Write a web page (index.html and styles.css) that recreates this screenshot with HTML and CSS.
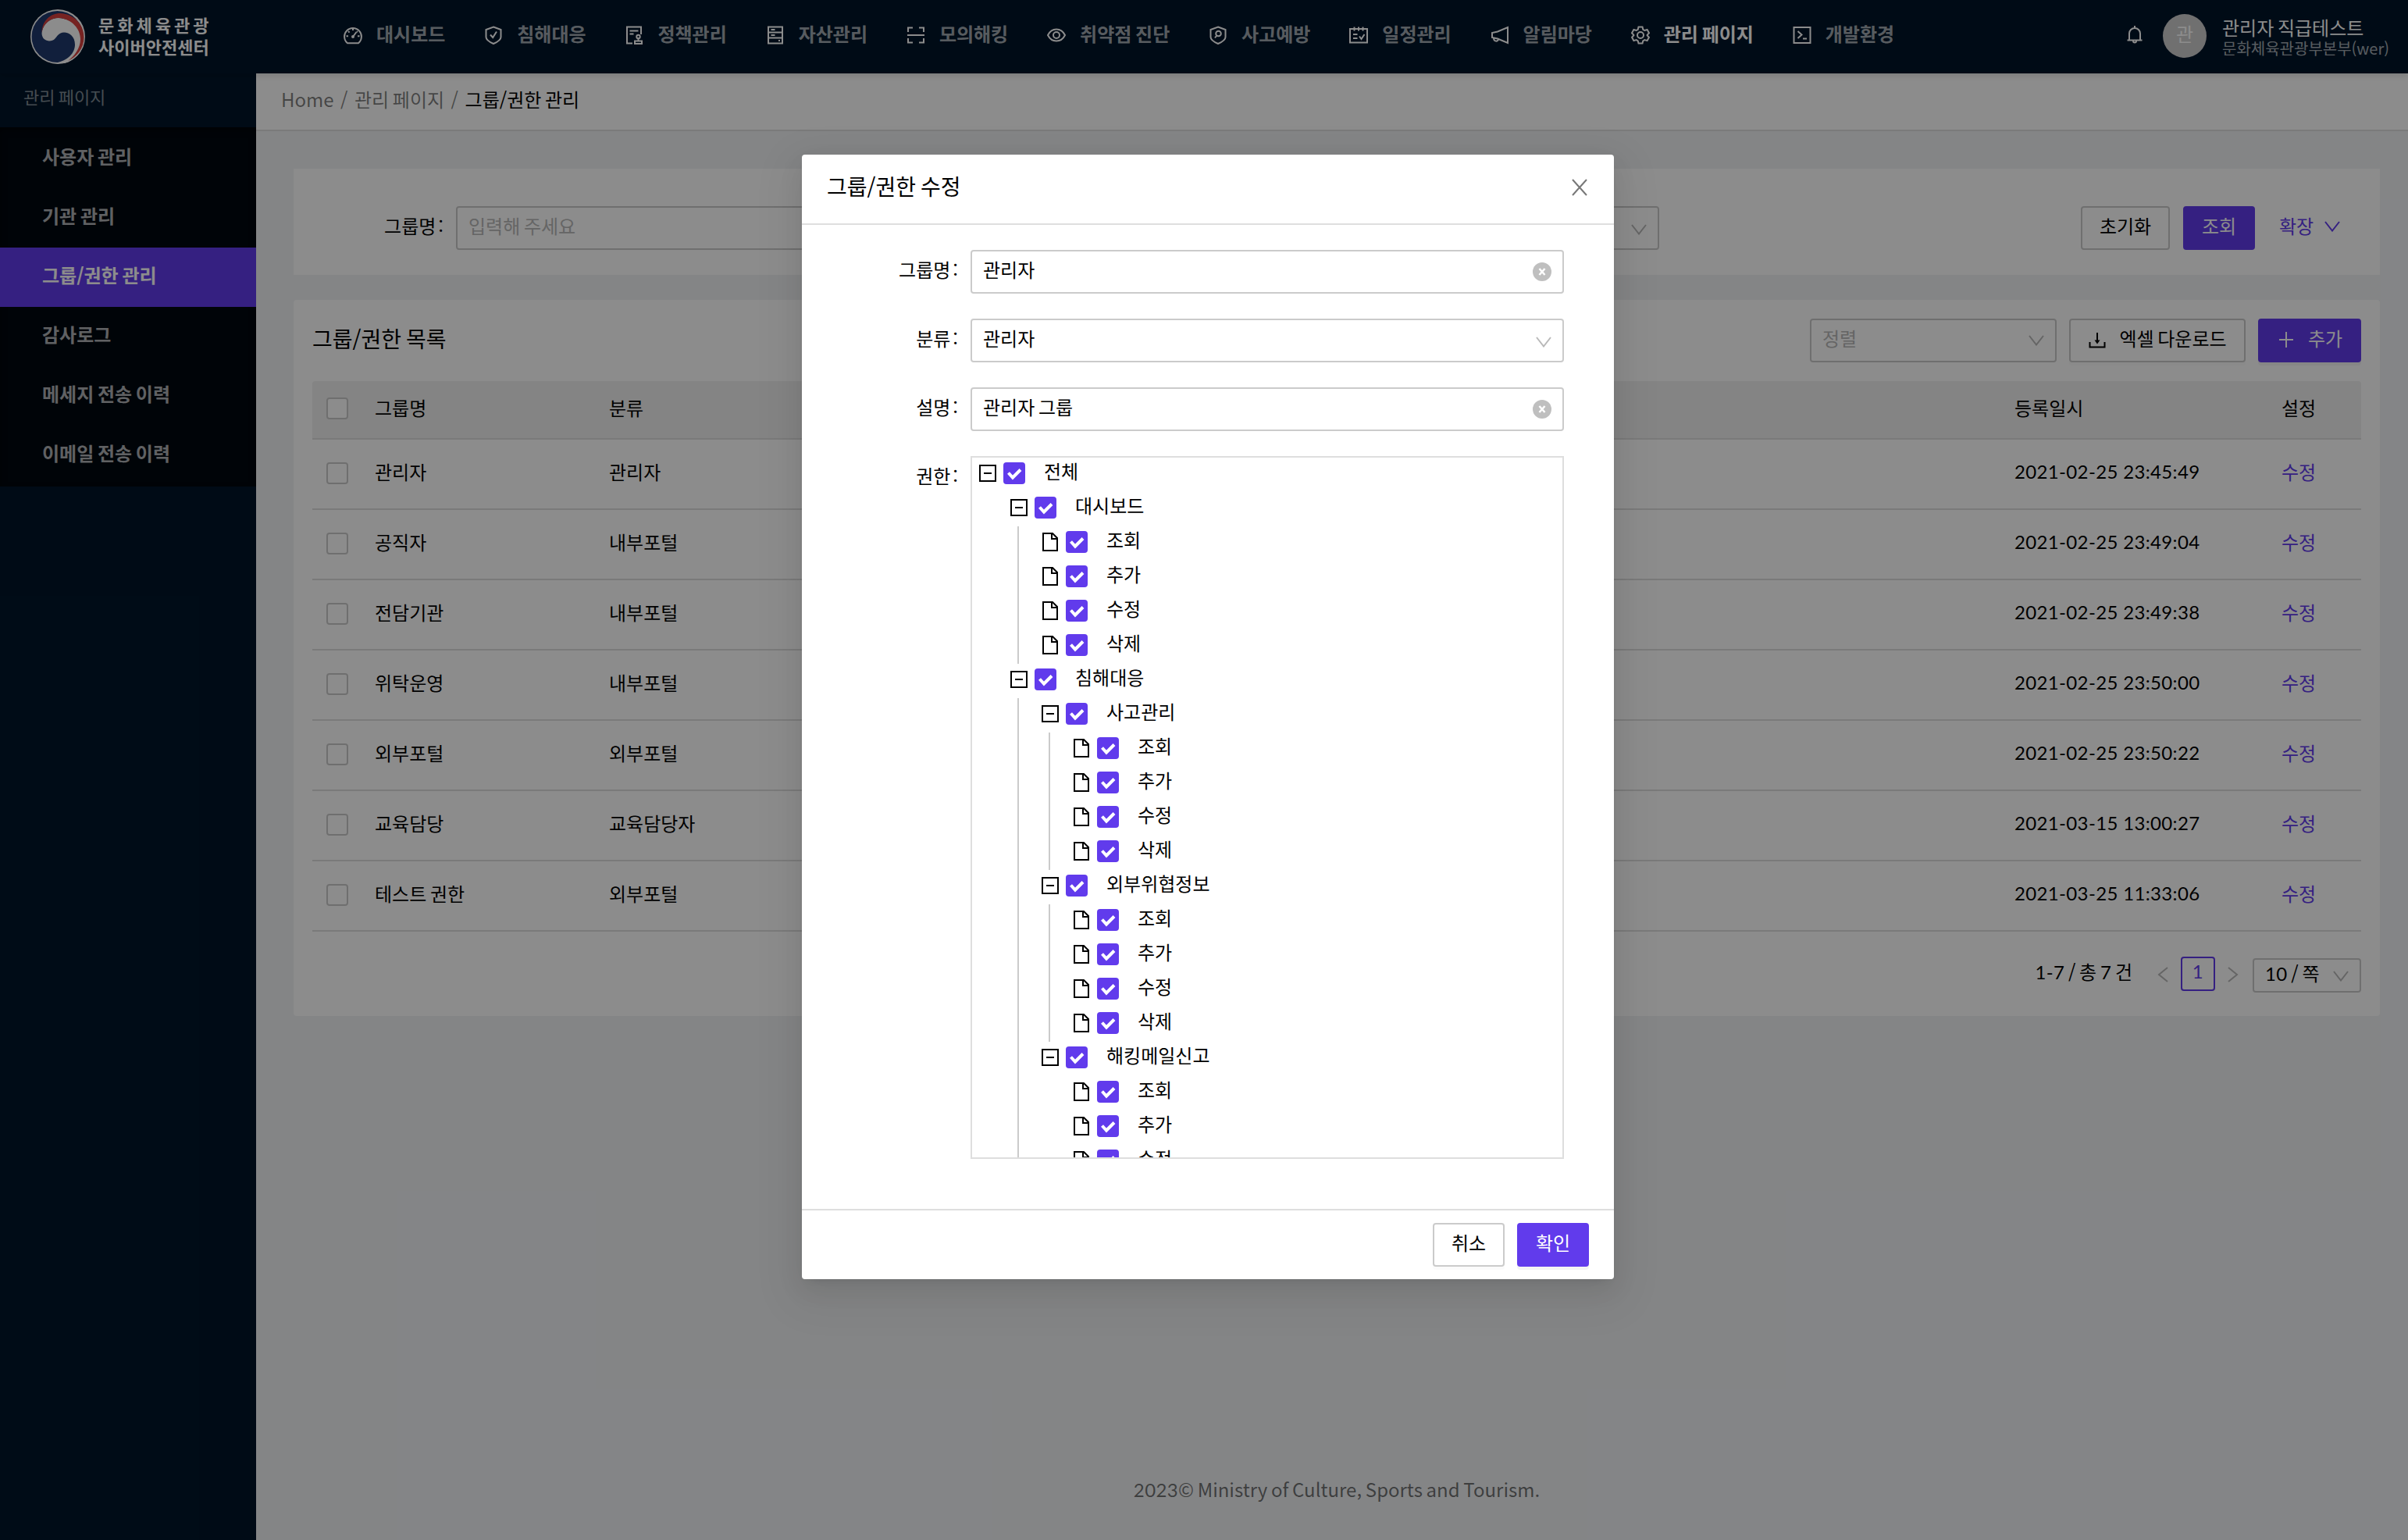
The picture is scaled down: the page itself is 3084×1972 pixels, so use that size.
FILE: index.html
```html
<!DOCTYPE html>
<html lang="ko">
<head>
<meta charset="utf-8">
<title>그룹/권한 관리</title>
<link rel="stylesheet" href="styles.css">
</head>
<body>
<svg class="sprite" aria-hidden="true">
  <symbol id="i-dash" viewBox="0 0 24 24"><path d="M5 22.2A10.9 10.9 0 1 1 19 22.2Z"/><path d="M12 14 16.5 8M12 3.5V6M3.5 13.2H6M18 13.2h2.500M6 7l1.600 1.600M18 7l-1 1" /><circle cx="12" cy="14" r="1"/></symbol>
  <symbol id="i-shield" viewBox="0 0 24 24"><path d="M12 1.500 21.500 5v9.500c0 3-5 6.500-9.500 8.500-4.500-2-9.500-5.500-9.500-8.500V5Z"/><path d="m8 11.500 3.200 3.500L16 7.500"/></symbol>
  <symbol id="i-policy" viewBox="0 0 24 24"><path d="M10 22.500H3V1.500h18V11M6.500 6.500h11M6.500 10.500h5"/><circle cx="17.500" cy="14" r="2.200"/><path d="M17.500 16v3.500M13 19.500h9v3.500h-9z"/></symbol>
  <symbol id="i-server" viewBox="0 0 24 24"><path d="M3 1.500h18v21H3zM3 8.500h18M3 15.500h18M6.500 5h5M6.500 12h5"/><path d="M16 19h2"/></symbol>
  <symbol id="i-scan" viewBox="0 0 24 24"><path d="M2 8V2.500h6M16 2.500h6V8M2 16v5.500h6M16 21.500h6V16M1 12h22"/></symbol>
  <symbol id="i-eye" viewBox="0 0 24 24"><path d="M1 12C6 2 18 2 23 12 18 22 6 22 1 12Z"/><circle cx="12" cy="12" r="4"/></symbol>
  <symbol id="i-prevent" viewBox="0 0 24 24"><path d="M12 1.500 21.500 5v9.500c0 3-5 6.500-9.500 8.500-4.500-2-9.500-5.500-9.500-8.500V5Z"/><circle cx="12.500" cy="10" r="3.300"/><path d="m10.300 12.500-2.300 3"/></symbol>
  <symbol id="i-cal" viewBox="0 0 24 24"><path d="M1 4h22v17.500H1zM6.500 1.500v5M12 1.500v5M17.500 1.500v5M5 11h5.500M5 16h5.500M13 13.500l2.500 3.500 4-6"/></symbol>
  <symbol id="i-horn" viewBox="0 0 24 24"><path d="M22 2v20L9 16.500 2 15V9l7-1.500ZM4 15.500c0 5 5.500 5.500 6 1.500"/></symbol>
  <symbol id="i-gear" viewBox="0 0 24 24"><path d="M9.500 1.500h5l.8 3.300 2 1.200 3.300-1 2.400 4.300-2.400 2.500v.5l2.400 2.500-2.400 4.300-3.300-1-2 1.200-.8 3.300h-5l-.8-3.300-2-1.200-3.300 1L1 14.800l2.400-2.500v-.5L1 9.300 3.400 5l3.300 1 2-1.200Z"/><circle cx="12" cy="12" r="4"/></symbol>
  <symbol id="i-dev" viewBox="0 0 24 24"><path d="M1.500 2h21v20h-21zM6.500 7l5 4.500-5 4.500M13 16.500h5"/></symbol>
  <symbol id="i-bell" viewBox="0 0 24 24"><path d="M5 19.500V11a7 7 0 0 1 14 0v8.500M2.500 19.500h19M12 1v3M10 20.500a2 2 0 0 0 4 0"/></symbol>
  <symbol id="i-down" viewBox="0 0 20 14"><path d="m1 1 9 11.500L19 1"/></symbol>
  <symbol id="i-file" viewBox="0 0 20 24"><path d="M1 1h12l6 6v16H1zM12 1v7h7"/></symbol>
  <symbol id="i-minus" viewBox="0 0 22 22"><path d="M1 1h20v20H1zM6 11h10"/></symbol>
  <symbol id="i-check" viewBox="0 0 28 28"><path d="m6.500 13.500 5.500 6 10-10"/></symbol>
  <symbol id="i-clear" viewBox="0 0 24 24"><circle cx="12" cy="12" r="12"/><path d="m8.500 8 7 8M15.500 8l-7 8"/></symbol>
</svg>

<div class="app">
  <header class="top">
    <div class="brand">
      <svg class="emblem" viewBox="0 0 70 70"><circle cx="35" cy="35" r="35" fill="#fff"/><circle cx="34.500" cy="35" r="33" fill="#1f3a6e"/><path fill="#fff" d="M14.500 32C15 18 26 11 36 11c18 1 33 14 33 27 0 15-13 28-25 31H31c17-3 26-13 26-24 0-10-7-15.500-14-15.500S34 35 31 38c-4 4-16.500 4-16.500-8Z"/><path fill="#d8403f" d="M14.500 30C15 14 26 5 38 5c19 1 30.500 15 30.500 31 0 14-9.500 25-20.500 30 8-6 16-16 16-28S54 12 36 11c-10 0-20 7-21.500 19Z"/></svg>
      <div class="brand-text"><b class="wide">문화체육관광</b><b>사이버안전센터</b></div>
    </div>
    <nav class="nav">
      <a><svg><use href="#i-dash"/></svg><span class="t">대시보드</span></a>
      <a><svg><use href="#i-shield"/></svg><span class="t">침해대응</span></a>
      <a><svg><use href="#i-policy"/></svg><span class="t">정책관리</span></a>
      <a><svg><use href="#i-server"/></svg><span class="t">자산관리</span></a>
      <a><svg><use href="#i-scan"/></svg><span class="t">모의해킹</span></a>
      <a><svg><use href="#i-eye"/></svg><span class="t">취약점 진단</span></a>
      <a><svg><use href="#i-prevent"/></svg><span class="t">사고예방</span></a>
      <a><svg><use href="#i-cal"/></svg><span class="t">일정관리</span></a>
      <a><svg><use href="#i-horn"/></svg><span class="t">알림마당</span></a>
      <a class="on"><svg><use href="#i-gear"/></svg><span class="t">관리 페이지</span></a>
      <a><svg><use href="#i-dev"/></svg><span class="t">개발환경</span></a>
    </nav>
    <div class="user">
      <svg class="bell"><use href="#i-bell"/></svg>
      <div class="avatar"><span class="t">관</span></div>
      <div class="who"><span class="name">관리자 직급테스트</span><span class="org">문화체육관광부본부(wer)</span></div>
    </div>
  </header>

  <div class="body">
    <aside class="side">
      <div class="side-title">관리 페이지</div>
      <ul class="menu">
        <li><span class="t">사용자 관리</span></li>
        <li><span class="t">기관 관리</span></li>
        <li class="on"><span class="t">그룹/권한 관리</span></li>
        <li><span class="t">감사로그</span></li>
        <li><span class="t">메세지 전송 이력</span></li>
        <li><span class="t">이메일 전송 이력</span></li>
      </ul>
    </aside>
    <main class="main">
      <div class="crumbs"><span class="t">Home</span><span class="t">/</span><span class="t">관리 페이지</span><span class="t">/</span><span class="t here">그룹/권한 관리</span></div>
      <div class="content">
        <section class="card search">
          <label class="lab"><span class="t">그룹명</span><span class="t colon">:</span></label>
          <div class="box grow hint"><span class="t">입력해 주세요</span></div>
          <div class="box second hint"><span class="t"></span><svg class="chev"><use href="#i-down"/></svg></div>
          <div class="btn reset"><span class="t">초기화</span></div>
          <div class="btn primary go"><span class="t">조회</span></div>
          <div class="expand"><span class="t">확장</span><svg class="chev"><use href="#i-down"/></svg></div>
        </section>
        <section class="card list">
          <div class="bar">
            <h2><span class="t">그룹/권한 목록</span></h2>
            <div class="box sort hint"><span class="t">정렬</span><svg class="chev"><use href="#i-down"/></svg></div>
            <div class="btn excel"><svg viewBox="0 0 24 24"><path d="M12 3v13M2.500 15v6.500h19V15"/><path class="solid" d="m8.500 12.500 3.500 5 3.500-5z"/></svg><span class="t">엑셀 다운로드</span></div>
            <div class="btn primary add"><svg viewBox="0 0 24 24"><path d="M12 2v20M3 12h18"/></svg><span class="t">추가</span></div>
          </div>
          <div class="table">
            <div class="tr th"><i class="cb"></i><span class="t">그룹명</span><span class="t">분류</span><span class="t">등록일시</span><span class="t mid">설정</span></div>
            <div class="tr"><i class="cb"></i><span class="t">관리자</span><span class="t">관리자</span><span class="t num">2021-02-25 23:45:49</span><span class="t mid link">수정</span></div>
            <div class="tr"><i class="cb"></i><span class="t">공직자</span><span class="t">내부포털</span><span class="t num">2021-02-25 23:49:04</span><span class="t mid link">수정</span></div>
            <div class="tr"><i class="cb"></i><span class="t">전담기관</span><span class="t">내부포털</span><span class="t num">2021-02-25 23:49:38</span><span class="t mid link">수정</span></div>
            <div class="tr"><i class="cb"></i><span class="t">위탁운영</span><span class="t">내부포털</span><span class="t num">2021-02-25 23:50:00</span><span class="t mid link">수정</span></div>
            <div class="tr"><i class="cb"></i><span class="t">외부포털</span><span class="t">외부포털</span><span class="t num">2021-02-25 23:50:22</span><span class="t mid link">수정</span></div>
            <div class="tr"><i class="cb"></i><span class="t">교육담당</span><span class="t">교육담당자</span><span class="t num">2021-03-15 13:00:27</span><span class="t mid link">수정</span></div>
            <div class="tr"><i class="cb"></i><span class="t">테스트 권한</span><span class="t">외부포털</span><span class="t num">2021-03-25 11:33:06</span><span class="t mid link">수정</span></div>
          </div>
          <div class="pager">
            <span class="t total"><span class="num">1-7</span> / 총 <span class="num">7</span> 건</span>
            <svg class="arr" viewBox="0 0 14 20"><path d="M13 1 2 10l11 9"/></svg>
            <div class="page"><span class="t num">1</span></div>
            <svg class="arr next" viewBox="0 0 14 20"><path d="m1 1 11 9-11 9"/></svg>
            <div class="box size"><span class="t"><span class="num">10</span> / 쪽</span><svg class="chev"><use href="#i-down"/></svg></div>
          </div>
        </section>
        <footer class="foot"><span class="t"><span class="num">2023</span>© Ministry of Culture, Sports and Tourism.</span></footer>
      </div>
    </main>
  </div>
</div>

<div class="mask">
  <div class="modal">
    <div class="m-head"><span class="t">그룹/권한 수정</span><svg class="close" viewBox="0 0 20 22"><path d="m1 1 18 20M19 1 1 21"/></svg></div>
    <div class="m-body">
      <div class="field"><label class="lab"><span class="t">그룹명</span><span class="t colon">:</span></label><div class="box"><span class="t">관리자</span><svg class="clear"><use href="#i-clear"/></svg></div></div>
      <div class="field"><label class="lab"><span class="t">분류</span><span class="t colon">:</span></label><div class="box"><span class="t">관리자</span><svg class="chev"><use href="#i-down"/></svg></div></div>
      <div class="field"><label class="lab"><span class="t">설명</span><span class="t colon">:</span></label><div class="box"><span class="t">관리자 그룹</span><svg class="clear"><use href="#i-clear"/></svg></div></div>
      <div class="field"><label class="lab"><span class="t">권한</span><span class="t colon">:</span></label>
        <div class="tree">
          <div class="node"><svg class="sw"><use href="#i-minus"/></svg><svg class="ck"><use href="#i-check"/></svg><span class="t">전체</span></div>
          <div class="kids">
            <div class="node"><svg class="sw"><use href="#i-minus"/></svg><svg class="ck"><use href="#i-check"/></svg><span class="t">대시보드</span></div>
            <div class="kids line">
              <div class="node"><svg class="fi"><use href="#i-file"/></svg><svg class="ck"><use href="#i-check"/></svg><span class="t">조회</span></div>
              <div class="node"><svg class="fi"><use href="#i-file"/></svg><svg class="ck"><use href="#i-check"/></svg><span class="t">추가</span></div>
              <div class="node"><svg class="fi"><use href="#i-file"/></svg><svg class="ck"><use href="#i-check"/></svg><span class="t">수정</span></div>
              <div class="node"><svg class="fi"><use href="#i-file"/></svg><svg class="ck"><use href="#i-check"/></svg><span class="t">삭제</span></div>
            </div>
            <div class="node"><svg class="sw"><use href="#i-minus"/></svg><svg class="ck"><use href="#i-check"/></svg><span class="t">침해대응</span></div>
            <div class="kids line">
              <div class="node"><svg class="sw"><use href="#i-minus"/></svg><svg class="ck"><use href="#i-check"/></svg><span class="t">사고관리</span></div>
              <div class="kids line">
                <div class="node"><svg class="fi"><use href="#i-file"/></svg><svg class="ck"><use href="#i-check"/></svg><span class="t">조회</span></div>
                <div class="node"><svg class="fi"><use href="#i-file"/></svg><svg class="ck"><use href="#i-check"/></svg><span class="t">추가</span></div>
                <div class="node"><svg class="fi"><use href="#i-file"/></svg><svg class="ck"><use href="#i-check"/></svg><span class="t">수정</span></div>
                <div class="node"><svg class="fi"><use href="#i-file"/></svg><svg class="ck"><use href="#i-check"/></svg><span class="t">삭제</span></div>
              </div>
              <div class="node"><svg class="sw"><use href="#i-minus"/></svg><svg class="ck"><use href="#i-check"/></svg><span class="t">외부위협정보</span></div>
              <div class="kids line">
                <div class="node"><svg class="fi"><use href="#i-file"/></svg><svg class="ck"><use href="#i-check"/></svg><span class="t">조회</span></div>
                <div class="node"><svg class="fi"><use href="#i-file"/></svg><svg class="ck"><use href="#i-check"/></svg><span class="t">추가</span></div>
                <div class="node"><svg class="fi"><use href="#i-file"/></svg><svg class="ck"><use href="#i-check"/></svg><span class="t">수정</span></div>
                <div class="node"><svg class="fi"><use href="#i-file"/></svg><svg class="ck"><use href="#i-check"/></svg><span class="t">삭제</span></div>
              </div>
              <div class="node"><svg class="sw"><use href="#i-minus"/></svg><svg class="ck"><use href="#i-check"/></svg><span class="t">해킹메일신고</span></div>
              <div class="kids">
                <div class="node"><svg class="fi"><use href="#i-file"/></svg><svg class="ck"><use href="#i-check"/></svg><span class="t">조회</span></div>
                <div class="node"><svg class="fi"><use href="#i-file"/></svg><svg class="ck"><use href="#i-check"/></svg><span class="t">추가</span></div>
                <div class="node"><svg class="fi"><use href="#i-file"/></svg><svg class="ck"><use href="#i-check"/></svg><span class="t">수정</span></div>
              </div>
            </div>
          </div>
        </div>
      </div>
    </div>
    <div class="m-foot"><div class="btn"><span class="t">취소</span></div><div class="btn primary"><span class="t">확인</span></div></div>
  </div>
</div>
</body>
</html>
```

FILE: styles.css
```css
* { box-sizing: border-box; }
html, body { margin: 0; height: 1972px; overflow: hidden; }
body { font: 24px/36px "Noto Sans CJK KR", "Noto Sans CJK JP", sans-serif; word-spacing: -2px; color: #000; background: #f0f2f5; position: relative; }
.sprite { display: none; }
svg { fill: none; stroke: currentColor; stroke-width: 2; flex: none; }
.t { display: inline-block; padding-bottom: 6px; white-space: nowrap; }
.num { font-family: Lato, "Noto Sans CJK KR", sans-serif; letter-spacing: .35px; word-spacing: 0; }

.app { display: flex; flex-direction: column; height: 1972px; }
.top { height: 94px; background: #001529; display: flex; align-items: center; color: #fff; z-index: 1; box-shadow: 0 2px 8px rgba(0,0,0,.15); }
.brand { display: flex; align-items: center; width: 440px; padding-left: 39px; }
.emblem { width: 70px; height: 70px; stroke: none; }
.brand-text { display: flex; flex-direction: column; margin-left: 17px; padding-bottom: 4px; font-size: 22px; line-height: 28px; }
.brand-text b { font-weight: 700; white-space: nowrap; }
.brand-text .wide { letter-spacing: 4px; }
.nav { display: flex; gap: 49.900px; flex: 1; padding-bottom: 5px; }
.nav a { display: flex; align-items: center; gap: 18px; color: rgba(255,255,255,.65); font-weight: 700; }
.nav a.on { color: #fff; }
.nav .t { padding-bottom: 4px; }
.nav svg { width: 24px; height: 24px; color: #fff; }
.user { display: flex; align-items: center; width: 362px; padding-bottom: 2px; }
.bell { width: 24px; height: 26px; margin-bottom: 4px; }
.avatar { width: 56px; height: 56px; border-radius: 50%; background: #ccc; margin-left: 24px; display: flex; align-items: center; justify-content: center; }
.who { margin-left: 20px; display: flex; flex-direction: column; padding-top: 4px; white-space: nowrap; }
.name { line-height: 26px; }
.org { font-size: 20px; line-height: 27px; color: rgba(255,255,255,.65); }

.body { flex: 1; display: flex; }
.side { width: 328px; background: #001529; }
.side-title { height: 69px; padding: 11px 0 0 30px; font-size: 22px; color: rgba(255,255,255,.5); }
.menu { list-style: none; margin: 0; padding: 2px 0; background: #00080f; box-shadow: inset 0 4px 8px rgba(0,0,0,.45); }
.menu li { height: 76px; display: flex; align-items: center; padding-left: 54px; color: rgba(255,255,255,.7); font-weight: 700; }
.menu li.on { background: #613bec; color: #fff; }

.main { flex: 1; display: flex; flex-direction: column; }
.crumbs { height: 74px; background: #fff; border-bottom: 2px solid #dedede; padding-left: 32px; display: flex; align-items: center; gap: 8.500px; color: rgba(0,0,0,.5); }
.crumbs .here { color: #000; }
.content { flex: 1; padding: 48px 36px 40px 48px; display: flex; flex-direction: column; }
.card { background: #fff; }
.search { height: 136px; padding: 48px 48px; display: flex; }
.lab { display: flex; align-items: center; justify-content: flex-end; height: 56px; }
.colon { margin: 0 16px 0 3px; }
.search .lab { width: 160px; }
.box { height: 56px; border: 2px solid #cbcbcb; border-radius: 4px; padding: 0 14px; display: flex; align-items: center; justify-content: space-between; }
.box .chev { margin-top: 4px; color: #b9b9b9; }
.box.sort .chev { margin-top: 0; }
.hint { color: #b8b8b8; }
.chev { width: 20px; height: 14px; }
.grow { width: 580px; }
.second { width: 761px; margin-left: 200px; }
.btn { height: 56px; min-width: 92px; border: 2px solid #cbcbcb; border-radius: 4px; display: flex; align-items: center; justify-content: center; background: #fff; box-shadow: 0 4px 0 rgba(0,0,0,.015); }
.btn.primary { background: #613bec; border-color: #613bec; color: #fff; box-shadow: 0 4px 0 rgba(0,0,0,.045); }
.reset { width: 114px; margin-left: 540px; box-shadow: none; }
.go { margin-left: 17px; box-shadow: none !important; }
.expand { display: flex; align-items: center; height: 56px; margin-left: 31px; gap: 14px; color: #613bec; }
.expand .chev { margin-bottom: 4px; }

.list { margin-top: 32px; height: 917px; border-radius: 4px; padding: 24px; }
.bar { display: flex; }
.bar h2 { margin: 0; flex: 1; font-size: 28px; font-weight: 400; height: 56px; display: flex; align-items: center; }
.sort { width: 316px; }
.excel { width: 226px; margin-left: 16px; gap: 16px; }
.excel svg, .add svg { width: 24px; height: 24px; margin-bottom: 3px; }
.excel .solid { fill: currentColor; stroke: none; }
.add { width: 132px; margin-left: 16px; gap: 16px; }
.table { margin-top: 24px; }
.tr { display: grid; grid-template-columns: 62px 300px 1800px 284px 160px; padding-left: 18px; align-items: center; height: 90px; border-bottom: 2px solid #dedede; }
.th { height: 75px; background: #f0f0f0; border-radius: 4px 4px 0 0; }
.cb { width: 28px; height: 28px; margin-bottom: 3px; border: 2px solid #cbcbcb; border-radius: 4px; background: #fff; }
.mid { justify-self: center; }
.link { color: #613bec; }
.pager { display: flex; align-items: center; justify-content: flex-end; margin-top: 32px; height: 46px; }
.total { padding-bottom: 8px; }
.arr { width: 14px; height: 20px; margin-left: 32px; color: #b9b9b9; }
.arr.next { margin-left: 16px; }
.page { width: 44px; height: 44px; border: 2px solid #613bec; border-radius: 4px; color: #613bec; margin: 0 0 2px 16px; display: flex; align-items: center; justify-content: center; }
.size { height: 44px; width: 139px; margin: 2px 0 0 18px; }
.box.size .chev { margin-top: 2px; }
.foot { margin-top: auto; text-align: center; color: rgba(0,0,0,.55); }

.mask { position: absolute; inset: 0; z-index: 10; background: rgba(0,0,0,.45); display: flex; justify-content: center; align-items: flex-start; padding: 198px 0 0 10px; }
.modal { width: 1040px; background: #fff; border-radius: 4px; box-shadow: 0 6px 12px -8px rgba(0,0,0,.12), 0 12px 32px rgba(0,0,0,.08), 0 18px 56px 16px rgba(0,0,0,.05); }
.m-head { height: 90px; border-bottom: 2px solid #dedede; padding: 0 34px 0 32px; display: flex; align-items: center; justify-content: space-between; font-size: 28px; }
.m-head .t { padding-bottom: 8px; }
.close { width: 20px; height: 22px; color: #777; margin-bottom: 4px; }
.m-body { height: 1260px; padding: 32px 64px 0 64px; display: flex; flex-direction: column; gap: 32px; }
.field { display: flex; align-items: flex-start; }
.field .lab { width: 152px; }
.field .box { width: 760px; }
.clear { width: 24px; height: 24px; fill: #bfbfbf; stroke: none; }
#i-clear path { stroke: #fff; stroke-width: 2.500; }
.tree { width: 760px; height: 900px; border: 2px solid #dedede; overflow: hidden; }
.node { height: 44px; padding-bottom: 4px; display: flex; align-items: center; }
.sw { width: 22px; height: 22px; margin: 0 9px; }
.fi { width: 20px; height: 24px; margin: 0 10px; }
.ck { width: 28px; height: 28px; background: #613bec; border-radius: 4px; color: #fff; stroke-width: 4; margin-right: 24px; }
.kids { padding-left: 40px; }
.line { background: linear-gradient(#cbcbcb, #cbcbcb) 18px 0 / 2px 100% no-repeat; }
.m-foot { height: 90px; border-top: 2px solid #dedede; padding: 16px 32px; display: flex; justify-content: flex-end; gap: 16px; }
```
